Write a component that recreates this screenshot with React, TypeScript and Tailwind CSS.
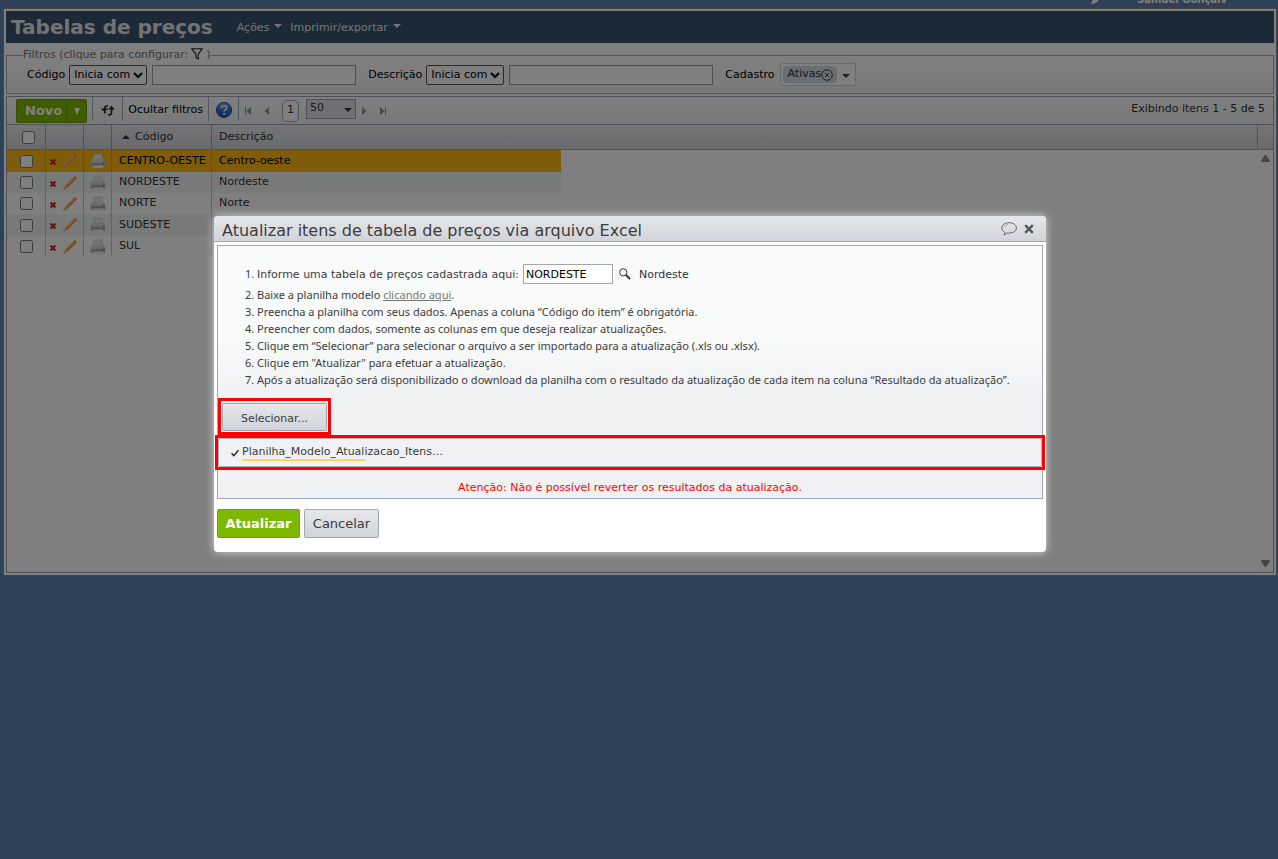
import { useState } from "react";
import type { ReactNode } from "react";

const rows = [
  { code: "CENTRO-OESTE", name: "Centro-oeste" },
  { code: "NORDESTE", name: "Nordeste" },
  { code: "NORTE", name: "Norte" },
  { code: "SUDESTE", name: "Sudeste" },
  { code: "SUL", name: "Sul" },
];

function Caret({ className }: { className: string }) {
  return (
    <svg className={className} viewBox="0 0 8 4" preserveAspectRatio="none" aria-hidden="true">
      <path d="M0 0h8L4 4z" fill="currentColor" />
    </svg>
  );
}

function ScrollArrow({ className = "" }: { className?: string }) {
  return (
    <svg className={`h-[7px] w-[9px] ${className}`} viewBox="0 0 9 7" aria-hidden="true">
      <path d="M.8 0h7.4q1 .2.6 1.200L5.700 6.200q-1.200 1.400-2.400 0L.2 1.200Q-.2.2.8 0z" fill="currentColor" />
    </svg>
  );
}

function FunnelIcon() {
  return (
    <svg className="h-3 w-3" viewBox="0 0 12 12" fill="none" stroke="#222" strokeWidth="1.1" aria-hidden="true">
      <path d="M.6.7h10.8L7.2 6.2v4.9L4.9 9.3V6.2z" strokeLinejoin="round" />
    </svg>
  );
}

function RefreshIcon() {
  return (
    <svg className="h-3 w-3.5" viewBox="0 0 14 12" fill="none" stroke="#222" strokeWidth="1.6" aria-hidden="true">
      <path d="M7 2H5.800Q3.800 2 3.800 4v5.500" />
      <path d="M.6 4.400h6.200v1.400H.6z" fill="#222" stroke="none" />
      <path d="M.4 5.400h3v2z" fill="#222" stroke="none" />
      <path d="M7 10.800h1.500q2 0 2-2V4.500" />
      <path d="M7.300 5.600h6.400l-3.200-3.800z" fill="#222" stroke="none" />
    </svg>
  );
}

function HelpIcon() {
  return (
    <svg className="h-4 w-4" viewBox="0 0 16 16" aria-hidden="true">
      <defs>
        <linearGradient id="help" x1="0" y1="0" x2="0" y2="1">
          <stop offset="0" stopColor="#8db8f2" />
          <stop offset="0.5" stopColor="#3372cf" />
          <stop offset="1" stopColor="#1f58b5" />
        </linearGradient>
      </defs>
      <circle cx="8" cy="8" r="7.5" fill="url(#help)" stroke="#1b4b9b" />
      <path d="M5.6 6.2Q5.7 4 8.1 4q2.4 0 2.4 2 0 1.2-1.2 1.9T8.1 9.6" fill="none" stroke="#fff" strokeWidth="1.7" />
      <circle cx="8.1" cy="11.8" r="1.1" fill="#fff" />
    </svg>
  );
}

function PencilIcon() {
  return (
    <svg className="h-3.5 w-3.5" viewBox="0 0 14 14" aria-hidden="true">
      <path d="M1.6 10.2 10.6 1.2l2.2 2.2-9 9z" fill="#f59a3c" />
      <path d="M1.6 10.2 10.6 1.2l.8.8-9 9z" fill="#ffc078" />
      <path d="m10.6 1.2.7-.7q.6-.5 1.1 0l1.1 1.1q.5.6 0 1.1l-.7.7z" fill="#e8883a" />
      <path d="m1.6 10.2 2.2 2.2L.5 13.5z" fill="#f7d8a8" />
      <path d="M1 12 .4 13.6 2 13z" fill="#333" />
    </svg>
  );
}

function DeleteIcon() {
  return (
    <svg className="h-2 w-2" viewBox="0 0 8 8" aria-hidden="true">
      <path d="M1.600 1.600l4.800 4.800M6.400 1.600 1.600 6.400" stroke="#cc2222" strokeWidth="2.1" />
    </svg>
  );
}

function PrinterIcon() {
  return (
    <svg className="h-4 w-4" viewBox="0 0 16 16" aria-hidden="true">
      <path d="M4 1.500Q4 1 4.600 1h6.800q.6 0 .6.500l.8 5.500H3.200z" fill="#e6e6e6" stroke="#bdbdbd" strokeWidth=".6" />
      <path d="M2.600 6h10.800l2 2.500v4.700q0 .8-.8.8H1.400q-.8 0-.8-.8V8.500z" fill="#b4b4b4" />
      <path d="M2.600 6h10.800l1.800 2.400v1.400H.8V8.400z" fill="#d6d6d6" />
      <path d="M3 12h10l.5 3H2.500z" fill="#ededed" />
      <path d="M3 11.500h10v.8H3z" fill="#8a8a8a" />
      <path d="M12.600 8.600h1.500v1.600h-1.500z" fill="#5fae4a" />
      <path d="M13 10.600h1.400v1.400H13z" fill="#e39a3a" />
    </svg>
  );
}

function PageArrow({ label, flip, bar }: { label: string; flip?: boolean; bar?: boolean }) {
  return (
    <button type="button" aria-label={label} className="flex h-4 w-[18px] items-center justify-center text-[#8e939b]">
      <svg className={flip ? "h-2 w-1.5 rotate-180" : "h-2 w-1.5"} viewBox="0 0 6 8" aria-hidden="true">
        <path d="M0 0l4.6 4L0 8z" fill="currentColor" />
        {bar && <path d="M5 0h1v8H5z" fill="currentColor" />}
      </svg>
    </button>
  );
}

function FilterText({ id, label }: { id: string; label: string }) {
  return (
    <div className="flex items-center">
      <label htmlFor={id} className="pt-0.5 pr-1 text-black">
        {label}
      </label>
      <select
        aria-label={`Operador de ${label}`}
        className="h-5 w-[78px] rounded-xs border border-[#555] bg-white text-black"
      >
        <option>Inicia com</option>
      </select>
      <input id={id} type="text" className="mt-px ml-[5px] h-5 w-[204px] border border-[#9b9fa5] bg-white px-0.5" />
    </div>
  );
}

function HeadCell({ children, className = "border-r" }: { children?: ReactNode; className?: string }) {
  return <th className={`h-[25px] border-b border-[#9fa6b2] p-0 font-normal ${className}`}>{children}</th>;
}

function PriceTableGrid() {
  return (
    <div className="flex h-[448px] border-t border-[#9fa6b2]">
      <div className="flex-1">
        <table className="w-full table-fixed border-separate border-spacing-0 text-left text-[#333]">
          <colgroup>
            <col className="w-[39px]" />
            <col className="w-[38px]" />
            <col className="w-7" />
            <col className="w-[100px]" />
            <col className="w-[349px]" />
            <col />
          </colgroup>
          <thead className="bg-linear-to-b from-[#e9eaed] to-[#d2d4d8]">
            <tr>
              <HeadCell>
                <span className="block pl-[15px]">
                  <input type="checkbox" aria-label="Selecionar todos" className="block h-[13px] w-[13px]" />
                </span>
              </HeadCell>
              <HeadCell />
              <HeadCell />
              <HeadCell>
                <span className="flex items-center gap-[5px] pl-2.5">
                  <Caret className="h-1 w-2 rotate-180" />
                  Código
                </span>
              </HeadCell>
              <HeadCell className="pl-[7px]">Descrição</HeadCell>
              <HeadCell />
            </tr>
          </thead>
          <tbody>
            {rows.map((row, i) => {
              const tone = i === 0 ? "bg-[#ffb914] text-black" : i % 2 === 1 ? "bg-[#f0f5f2]" : "bg-white";
              const cell = `${i % 3 === 0 ? "h-[22px]" : "h-[21px]"} p-0 ${tone}`;
              const line = i === 0 ? "border-r border-[#c9a04a]" : "border-r border-[#c4c8ce]";
              return (
                <tr key={row.code}>
                  <td className={`${cell} ${line}`}>
                    <input type="checkbox" aria-label={`Selecionar ${row.code}`} className="mx-auto block h-[13px] w-[13px]" />
                  </td>
                  <td className={`${cell} ${line}`}>
                    <span className="flex items-center gap-1.5 pl-[3px]">
                      <button type="button" aria-label={`Excluir ${row.code}`} className="pt-0.5">
                        <DeleteIcon />
                      </button>
                      <button type="button" aria-label={`Editar ${row.code}`}>
                        <PencilIcon />
                      </button>
                    </span>
                  </td>
                  <td className={`${cell} ${line}`}>
                    <button type="button" aria-label={`Imprimir ${row.code}`} className="mx-auto block">
                      <PrinterIcon />
                    </button>
                  </td>
                  <td className={`${cell} ${line}`}>
                    <span className="block pl-[7px]">{row.code}</span>
                  </td>
                  <td className={cell}>
                    <span className="block pl-[7px]">{row.name}</span>
                  </td>
                  <td />
                </tr>
              );
            })}
          </tbody>
        </table>
      </div>
      <div className="flex w-[15px] flex-col">
        <div className="h-[25px] border-b border-[#9fa6b2] bg-linear-to-b from-[#e9eaed] to-[#d2d4d8]" />
        <div className="flex flex-1 flex-col items-center justify-between bg-[#fcfcfc] py-[5px] text-[#8b8b8b]">
          <button type="button" aria-label="Rolar para cima">
            <ScrollArrow className="rotate-180" />
          </button>
          <button type="button" aria-label="Rolar para baixo">
            <ScrollArrow />
          </button>
        </div>
      </div>
    </div>
  );
}

function Toolbar() {
  return (
    <div className="flex h-[27px] items-stretch bg-linear-to-b from-white to-[#f0f1f1] pl-[9px] text-black">
      <div className="mt-0.5 flex h-6 rounded-xs border border-[#6a9a00] bg-[#7fb800] text-[13px] font-bold text-white">
        <button type="button" className="pr-1 pl-2">
          Novo
        </button>
        <button type="button" aria-label="Mais opções" className="w-5 border-l border-[#6a9a00]">
          <Caret className="mx-auto h-[7px] w-1.5" />
        </button>
      </div>
      <div className="mb-[3px] ml-[5px] flex border-r border-l border-[#a9afb8]">
        <button type="button" aria-label="Atualizar lista" className="flex w-[29px] items-center justify-center pt-0.5">
          <RefreshIcon />
        </button>
      </div>
      <button type="button" className="mb-[3px] border-r border-[#a9afb8] px-[5px] pt-0.5">
        Ocultar filtros
      </button>
      <button type="button" aria-label="Ajuda" className="mb-[3px] flex w-[30px] items-center justify-center border-r border-[#a9afb8] pt-0.5">
        <HelpIcon />
      </button>
      <div className="flex items-center">
        <PageArrow label="Primeira página" flip bar />
        <PageArrow label="Página anterior" flip />
        <button type="button" className="ml-[7px] h-[22px] w-[17px] rounded-[5px] border border-[#a0a6b0] bg-white text-[#333]">
          1
        </button>
        <div className="mb-1 ml-[7px] grid text-[#333]">
          <select
            aria-label="Itens por página"
            className="col-start-1 row-start-1 h-5 w-[50px] appearance-none border border-[#9fa6b2] bg-[#dfe1e5] pl-[3px]"
          >
            <option>50</option>
          </select>
          <Caret className="pointer-events-none col-start-1 row-start-1 mt-0.5 mr-1 h-1 w-2 self-center justify-self-end" />
        </div>
        <PageArrow label="Próxima página" />
        <PageArrow label="Última página" bar />
      </div>
      <span className="mr-2 ml-auto self-center pb-0.5 text-[#333]">Exibindo itens 1 - 5 de 5</span>
    </div>
  );
}

function Filters() {
  return (
    <fieldset className="h-[47px] border border-[#a7acb3] bg-linear-to-b from-white to-[#f1f4f2] pl-5">
      <legend className="-ml-1 flex h-4 items-center text-[#777]">
        Filtros (clique para configurar:
        <button type="button" aria-label="Configurar filtros" className="mx-[3px] mb-0.5">
          <FunnelIcon />
        </button>
        )
      </legend>
      <div className="flex h-[23px] items-center gap-3">
        <FilterText id="codigo" label="Código" />
        <FilterText id="descricao" label="Descrição" />
        <div className="flex items-center text-black">
          <span className="pt-0.5 pr-[5px]">Cadastro</span>
          <div className="flex h-[23px] items-center rounded-xs border border-[#d0d3d8] bg-white pr-1 pl-0.5">
            <span className="flex h-[17px] items-center rounded-sm bg-[#d5dbe8] pr-1 pl-[5px] text-[#333]">
              Ativas
              <button type="button" aria-label="Remover Ativas">
                <svg className="h-3 w-3" viewBox="0 0 12 12" fill="none" stroke="#444" aria-hidden="true">
                  <circle cx="6" cy="6" r="5.3" />
                  <path d="m4 4 4 4M8 4 4 8" />
                </svg>
              </button>
            </span>
            <button type="button" aria-label="Abrir lista de cadastro" className="ml-1 px-px pt-0.5 text-[#444]">
              <Caret className="h-1 w-2" />
            </button>
          </div>
        </div>
      </div>
    </fieldset>
  );
}

function UpdateDialog() {
  const [table, setTable] = useState("NORDESTE");
  const uploaded = 61;
  return (
    <div
      role="dialog"
      aria-labelledby="dialog-title"
      className="w-[832px] rounded-[4px] bg-white text-[#3c3c3c] shadow-[0_0_8px_#ffffffb0]"
    >
      <div className="flex h-[26px] items-center rounded-t-[4px] border-b border-[#9fa8b5] bg-linear-to-b from-[#e6e7ea] to-[#d0d3d8] pr-3 pl-2">
        <h2 id="dialog-title" className="flex-1 pt-1 text-[16px] leading-5">
          Atualizar itens de tabela de preços via arquivo Excel
        </h2>
        <button type="button" aria-label="Comentários">
          <svg className="h-3.5 w-4" viewBox="0 0 16 14" fill="none" stroke="#666" aria-hidden="true">
            <path d="M8.2.7C12.300.7 15.400 2.900 15.400 5.900c0 3-3.100 5.200-7.200 5.200-.8 0-1.500-.1-2.200-.2-.7 1-1.700 1.900-3.200 2.200.8-.8 1.100-1.800.9-2.900C1.900 9.200.8 7.700.8 5.900.8 2.900 4 .7 8.200.7z" />
            <path d="M3 5Q4 2.800 7 2.500" stroke="#999" strokeWidth=".8" />
          </svg>
        </button>
        <button type="button" aria-label="Fechar" className="ml-[7px]">
          <svg className="h-2.5 w-2.5" viewBox="0 0 10 10" aria-hidden="true">
            <path d="m1.200 1.200 7.600 7.600M8.800 1.200 1.200 8.800" stroke="#555" strokeWidth="2.4" />
          </svg>
        </button>
      </div>

      <div className="px-[3px] pt-[3px] pb-3.5">
        <div className="border border-[#9fa8b5] bg-[#f0f1f3]">
          <div className="bg-linear-to-b from-[#f9fbfa] from-60% to-[#f0f1f3] pt-[18px] pb-2.5">
            <ol className="list-decimal pl-[39px] font-['Noto_Sans',sans-serif] leading-[17px] whitespace-nowrap">
              <li>
                <div className="mb-0.5 flex h-5 items-center font-['DejaVu_Sans',Verdana,sans-serif]">
                  <label htmlFor="tabela">Informe uma tabela de preços cadastrada aqui:</label>
                  <input
                    id="tabela"
                    type="text"
                    value={table}
                    onChange={(e) => setTable(e.target.value)}
                    className="ml-1 h-5 w-[90px] border border-[#a5a5a5] bg-white px-0.5 text-black"
                  />
                  <button type="button" aria-label="Pesquisar tabela" className="ml-1.5">
                    <svg className="h-3 w-3" viewBox="0 0 12 12" fill="none" stroke="#333" aria-hidden="true">
                      <circle cx="4.300" cy="4.300" r="3.600" />
                      <path d="m7 7 4 4" strokeWidth="2" />
                    </svg>
                  </button>
                  <span className="ml-2 text-[#333]">Nordeste</span>
                </div>
              </li>
              <li>
                Baixe a planilha modelo{" "}
                <a href="#modelo" className="text-[#777] underline">
                  clicando aqui
                </a>
                .
              </li>
              <li>Preencha a planilha com seus dados. Apenas a coluna “Código do item” é obrigatória.</li>
              <li>Preencher com dados, somente as colunas em que deseja realizar atualizações.</li>
              <li>Clique em “Selecionar” para selecionar o arquivo a ser importado para a atualização (.xls ou .xlsx).</li>
              <li>Clique em "Atualizar" para efetuar a atualização.</li>
              <li>
                Após a atualização será disponibilizado o download da planilha com o resultado da atualização de cada
                item na coluna “Resultado da atualização”.
              </li>
            </ol>
          </div>

          <div className="flex">
            <div className="border-[3px] border-[#ff0000] px-px pt-0.5 pb-px">
              <button
                type="button"
                className="h-[28px] w-[105px] rounded-xs border border-[#9fa8b5] bg-linear-to-b from-[#e6e7ea] to-[#d0d4d9] pt-1"
              >
                Selecionar...
              </button>
            </div>
          </div>
          <div className="-mx-[3px] border-[3px] border-[#ff0000]">
            <div className="flex h-[29px] items-center rounded-xs border border-[#b0b6c0] pl-3">
              <svg className="h-2 w-2" viewBox="0 0 8 8" fill="none" stroke="#222" strokeWidth="1.4" aria-hidden="true">
                <path d="m.6 4.200 2.200 2.400L7.400 1.200" />
              </svg>
              <div className="ml-[3px] flex flex-col">
                <span className="leading-4">Planilha_Modelo_Atualizacao_Itens…</span>
                <span className="-mt-px h-0.5 bg-[#ffd75e]" style={{ width: `${uploaded}%` }} />
              </div>
            </div>
          </div>
          <p className="pt-2.5 pb-0.5 text-center leading-4 text-[#ff0000]">
            Atenção: Não é possível reverter os resultados da atualização.
          </p>
        </div>

        <div className="mt-2.5 flex gap-1 text-[13px]">
          <button type="button" className="h-[29px] w-[83px] rounded-xs border border-[#6fa300] bg-[#7fb800] font-bold text-white">
            Atualizar
          </button>
          <button
            type="button"
            className="h-[29px] w-[75px] rounded-xs border border-[#9fa8b5] bg-linear-to-b from-[#e6e7ea] to-[#d0d4d9]"
          >
            Cancelar
          </button>
        </div>
      </div>
    </div>
  );
}

export default function App() {
  return (
    <div className="relative min-h-screen bg-[#5c82b0] font-['DejaVu_Sans',Verdana,sans-serif] text-[11px]">
      <div className="flex h-2 items-end justify-end gap-[34px] overflow-hidden pr-[51px] pb-[3px] text-[10px] font-bold text-white">
        <svg className="h-3 w-3" viewBox="0 0 12 12" aria-hidden="true">
          <path d="M0 11.500 1.500 7 8 1l3 3.500L4.500 10z" fill="#fff" />
        </svg>
        <span className="leading-none">Samuel Gonçalv</span>
      </div>

      <main className="mr-px ml-[3px] border border-[#888] bg-white p-0.5">
        <header className="flex h-8 items-center bg-[#385470] pl-[5px] text-[#e6e6e6]">
          <h1 className="text-[20px] font-bold">Tabelas de preços</h1>
          <nav className="ml-6 flex gap-2 pt-0.5">
            <button type="button" className="flex items-center gap-[5px]">
              Ações
              <Caret className="mb-1 h-1 w-2" />
            </button>
            <button type="button" className="flex items-center gap-[5px]">
              Imprimir/exportar
              <Caret className="mb-1 h-1 w-2" />
            </button>
          </nav>
        </header>

        <div className="pt-1">
          <Filters />
        </div>

        <section className="mt-0.5 border border-[#9fa6b2]">
          <Toolbar />
          <PriceTableGrid />
        </section>
      </main>

      <div className="absolute inset-0 bg-black/50" />
      <div className="absolute inset-x-0 top-[216px] flex justify-center pr-[18px]">
        <UpdateDialog />
      </div>
    </div>
  );
}
